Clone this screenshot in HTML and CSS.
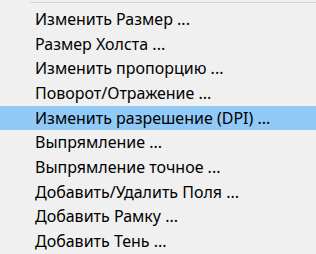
FILE: index.html
```html
<!DOCTYPE html>
<html lang="ru">
<head>
    <meta charset="UTF-8">
    <title>Меню</title>
    <link rel="stylesheet" href="styles.css">
</head>
<body>
<div class="menu">
    <div class="sep"></div>
    <ul class="items">
        <li>Изменить Размер ...</li>
        <li>Размер Холста ...</li>
        <li>Изменить пропорцию ...</li>
        <li>Поворот/Отражение ...</li>
        <li class="active">Изменить разрешение (DPI) ...</li>
        <li>Выпрямление ...</li>
        <li>Выпрямление точное ...</li>
        <li>Добавить/Удалить Поля ...</li>
        <li>Добавить Рамку ...</li>
        <li>Добавить Тень ...</li>
    </ul>
</div>
</body>
</html>
```

FILE: styles.css
```css
body {
    margin: 0;
    background-color: #f0f0f0;
    font-family: "Noto Sans", sans-serif;
    font-size: 16px;
    color: #000;
}
.menu {
    padding-top: 2px;
}
.sep {
    height: 1px;
    margin-left: 30px;
    background-color: #d4d4d4;
}
.items {
    list-style: none;
    margin: 0;
    padding: 4px 0 0 0;
}
.items li {
    height: 24.67px;
    line-height: 24.67px;
    padding-left: 35px;
    white-space: nowrap;
}
.items li.active {
    background-color: #91c9f7;
}
```
